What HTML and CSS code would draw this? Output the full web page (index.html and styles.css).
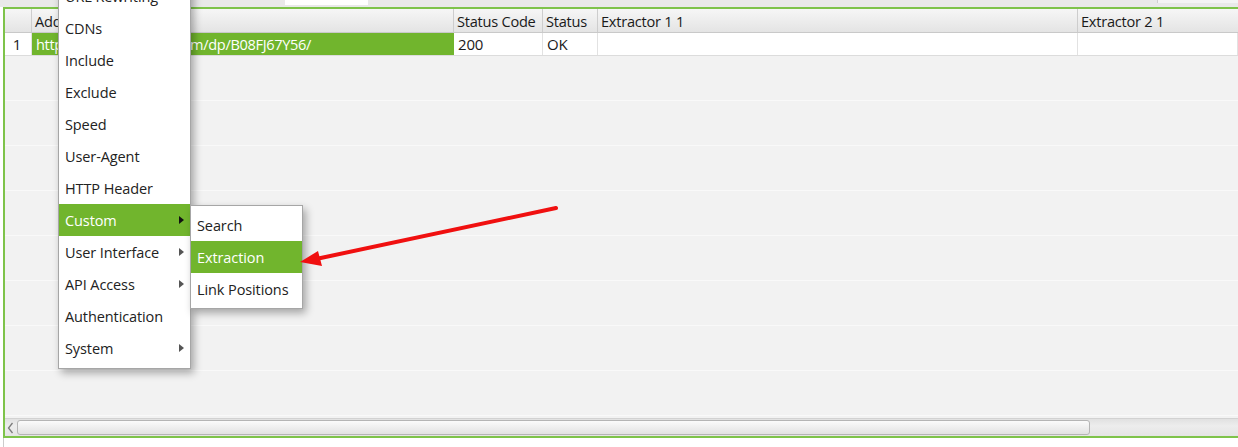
FILE: index.html
```html
<!DOCTYPE html>
<html>
<head>
<meta charset="utf-8">
<link rel="stylesheet" href="styles.css">
</head>
<body>
<div class="page">
  <div class="topbar">
    <div class="tb-field tb-field-a"></div>
    <div class="tb-spacer"></div>
    <div class="tb-field tb-field-b"></div>
  </div>
  <div class="panel">
    <div class="grid">
      <div class="hrow">
        <div class="hc c-num"></div>
        <div class="hc c-addr">Address</div>
        <div class="hc c-code">Status Code</div>
        <div class="hc c-stat">Status</div>
        <div class="hc c-ex1">Extractor 1 1</div>
        <div class="hc c-ex2">Extractor 2 1</div>
      </div>
      <div class="drow">
        <div class="dc c-num num">1</div>
        <div class="dc c-addr sel">https://www.amazon.com/dp/B08FJ67Y56/</div>
        <div class="dc c-code">200</div>
        <div class="dc c-stat">OK</div>
        <div class="dc c-ex1"></div>
        <div class="dc c-ex2"></div>
      </div>
      <div class="empty"></div>
    </div>
    <div class="hscroll">
      <svg class="sarrow" width="12" height="16" viewBox="0 0 12 16">
        <polyline points="7.5,3 3.5,8 7.5,13" fill="none" stroke="#7a7a7a" stroke-width="1.3"/>
      </svg>
      <div class="sthumb"></div>
      <div class="strack"></div>
    </div>
  </div>
  <div class="under"></div>

  <div class="menu main-menu">
    <div class="mi">URL Rewriting</div>
    <div class="mi">CDNs</div>
    <div class="mi">Include</div>
    <div class="mi">Exclude</div>
    <div class="mi">Speed</div>
    <div class="mi">User-Agent</div>
    <div class="mi">HTTP Header</div>
    <div class="mi active sub">Custom<span class="tri dark"></span></div>
    <div class="mi sub">User Interface<span class="tri"></span></div>
    <div class="mi sub">API Access<span class="tri"></span></div>
    <div class="mi">Authentication</div>
    <div class="mi sub">System<span class="tri"></span></div>
  </div>

  <div class="menu sub-menu">
    <div class="mi">Search</div>
    <div class="mi active">Extraction</div>
    <div class="mi">Link Positions</div>
  </div>

  <svg class="arrow" width="1238" height="447" viewBox="0 0 1238 447">
    <line x1="556" y1="208" x2="316" y2="259" stroke="#f01010" stroke-width="4" stroke-linecap="round"/>
    <polygon points="300,262 318,251 322,266" fill="#f01010"/>
  </svg>
</div>
</body>
</html>
```
FILE: styles.css
```css
* { box-sizing: border-box; }
html, body { margin: 0; padding: 0; background: #ffffff; }
body {
  width: 1238px;
  height: 447px;
  overflow: hidden;
  font-family: "Open Sans", "Noto Sans", sans-serif;
  color: #1e1e1e;
}
.page { position: relative; width: 1238px; height: 447px; }

.topbar {
  height: 7px;
  background: #e9e9e9;
  display: flex;
  align-items: flex-start;
}
.tb-field { background: #ffffff; height: 5px; }
.tb-field-a { margin-left: 285px; width: 83px; }
.tb-spacer { flex: 1; }
.tb-field-b { width: 81px; height: 3px; background: #f4f4f4; border-left: 1px solid #cfcfcf; }

.panel {
  margin-left: 3px;
  height: 431px;
  border-top: 2px solid #7ec34a;
  border-left: 2px solid #7ec34a;
  border-bottom: 2px solid #7ec34a;
  display: flex;
  flex-direction: column;
  background: #f2f2f2;
}
.grid { flex: 1; display: flex; flex-direction: column; }

.hrow {
  display: flex;
  height: 24px;
  background: linear-gradient(#f6f6f6, #e4e4e4);
  border-bottom: 1px solid #c9c9c9;
}
.hc {
  font-size: 14.6px;
  line-height: 24px;
  padding-left: 3px;
  border-right: 1px solid #cdcdcd;
  white-space: nowrap;
  overflow: hidden;
  letter-spacing: -0.25px;
  color: #1a1a1a;
}
.c-num { width: 27px; }
.c-addr { width: 422px; }
.c-code { width: 89px; }
.c-stat { width: 55px; }
.c-ex1 { width: 480px; }
.c-ex2 { flex: 1; border-right: none; }

.drow {
  display: flex;
  height: 23px;
  background: #ffffff;
  border-bottom: 1px solid #dcdcdc;
}
.dc {
  font-size: 15px;
  line-height: 23px;
  padding-left: 4px;
  border-right: 1px solid #e2e2e2;
  white-space: nowrap;
  overflow: hidden;
  letter-spacing: -0.2px;
  color: #1a1a1a;
}
.dc.num { padding-left: 0; text-align: center; padding-right: 2px; }
.dc.sel {
  background: #71b52d;
  color: #ffffff;
  border-right-color: #71b52d;
  letter-spacing: -0.35px;
  font-size: 14.6px;
  padding-left: 4px;
}

.empty {
  flex: 1;
  background: repeating-linear-gradient(to bottom,
    #f2f2f2 0px, #f2f2f2 44px, #f9f9f9 44px, #f9f9f9 45px);
}

.hscroll {
  height: 18px;
  display: flex;
  align-items: center;
  background: linear-gradient(#e1e1e1, #ededed 40%, #e4e4e4);
  border-top: 1px solid #d2d2d2;
}
.sarrow { display: block; width: 12px; height: 16px; flex: none; }
.sthumb {
  width: 1073px;
  height: 15px;
  border: 1px solid #b5b5b5;
  border-radius: 3px;
  background: linear-gradient(#fbfbfb, #ececec 60%, #e2e2e2);
}
.strack { flex: 1; }

.under {
  height: 9px;
  margin-left: 3px;
  border-left: 1px solid #cccccc;
}

.menu {
  position: absolute;
  background: #ffffff;
  border: 1px solid #a6a6a6;
  box-shadow: 3px 4px 8px rgba(0, 0, 0, 0.32);
  font-size: 14.5px;
  color: #222222;
}
.main-menu { left: 58px; top: -22px; width: 133px; padding: 1px 0 4px; }
.sub-menu { left: 190px; top: 205px; width: 113px; padding: 3px 0 3px; }
.mi {
  position: relative;
  height: 32px;
  line-height: 34px;
  padding-left: 6px;
  white-space: nowrap;
  letter-spacing: -0.1px;
}
.mi.active { background: #71b52d; color: #ffffff; }
.tri {
  position: absolute;
  right: 6px;
  top: 12px;
  width: 0;
  height: 0;
  border-top: 4px solid transparent;
  border-bottom: 4px solid transparent;
  border-left: 5px solid #555555;
}
.tri.dark { border-left-color: #111111; }

.arrow { position: absolute; left: 0; top: 0; pointer-events: none; }
```
